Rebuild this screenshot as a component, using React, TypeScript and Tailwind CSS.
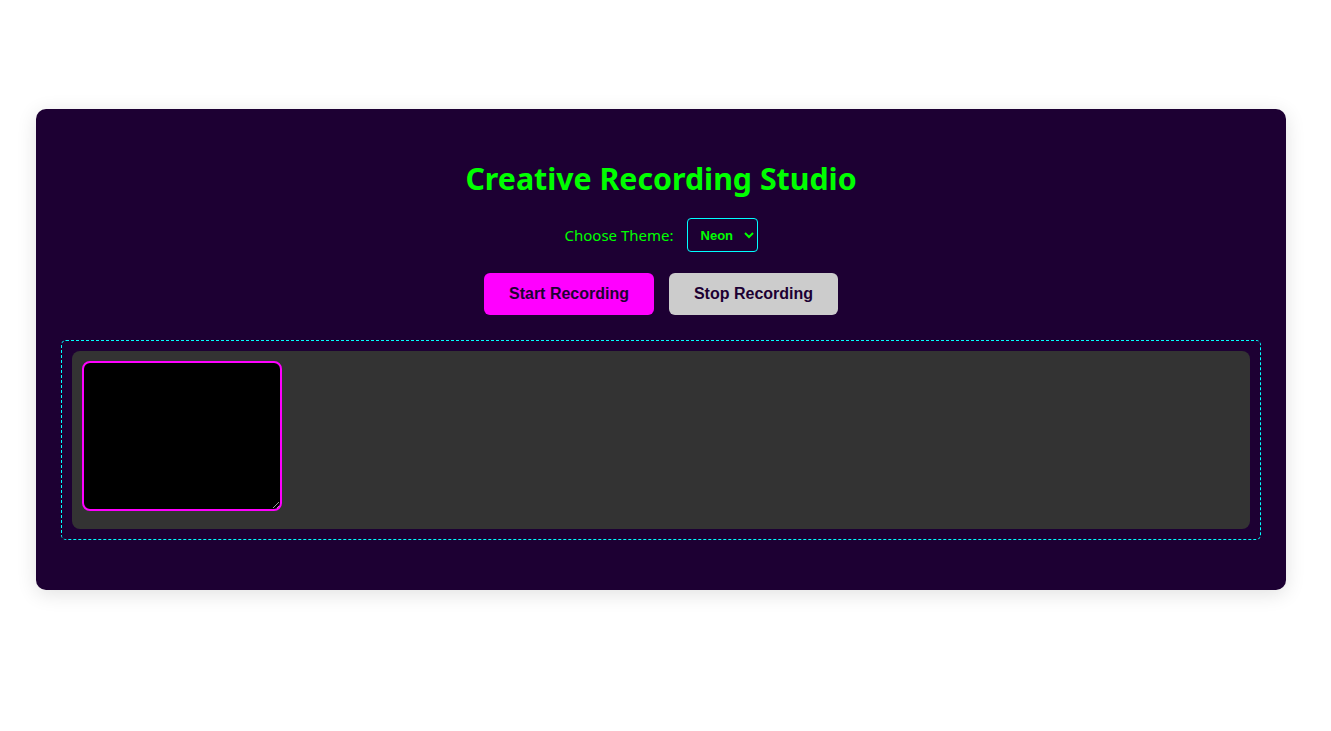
import React from "react";

export default function App() {
  return (
    <div className="min-h-[731px] w-full bg-white pt-[109px] pl-[36px]" style={{ fontFamily: '"Noto Sans", sans-serif' }}>
      <div className="w-[1250px] h-[481px] rounded-[10px] bg-[#1d0033] shadow-[0_4px_20px_rgba(0,0,0,0.12)] px-[25px] pt-[50px] pb-[50px] flex flex-col items-center">
        <h1 className="h-[40px] leading-[40px] text-[30.3px] font-bold text-[#00ff00] text-center" style={{ fontFamily: '"Noto Sans", sans-serif' }}>
          Creative Recording Studio
        </h1>
        <div className="mt-[19px] h-[34px] flex items-center gap-[13px]">
          <label className="text-[15px] text-[#00ff00]" style={{ fontFamily: '"Noto Sans", sans-serif' }}>Choose Theme:</label>
          <select
            defaultValue="neon"
            className="h-[34px] w-[71px] rounded-[4px] border border-[#00ffff] bg-[#1d0033] text-[#00ff00] text-[13px] font-bold pl-[9px]"
            style={{ fontFamily: '"Liberation Sans", Arial, sans-serif' }}
          >
            <option value="neon">Neon</option>
            <option value="dark">Dark</option>
            <option value="light">Light</option>
          </select>
        </div>
        <div className="mt-[21px] flex gap-[15px]" style={{ fontFamily: '"Liberation Sans", Arial, sans-serif' }}>
          <button className="w-[170px] h-[42px] rounded-[6px] bg-[#ff00ff] text-[#1d0033] text-[16px] font-bold">
            Start Recording
          </button>
          <button className="w-[169px] h-[42px] rounded-[6px] bg-[#cccccc] text-[#1d0033] text-[16px] font-bold">
            Stop Recording
          </button>
        </div>
        <div className="mt-[25px] w-full h-[200px] rounded-[5px] border border-dashed border-[#00ffff] p-[10px]">
          <div className="w-full h-full rounded-[8px] bg-[#333333] p-[10px]">
            <textarea className="block w-[200px] h-[150px] rounded-[8px] border-2 border-[#ff00ff] bg-black text-white outline-none" />
          </div>
        </div>
      </div>
    </div>
  );
}
